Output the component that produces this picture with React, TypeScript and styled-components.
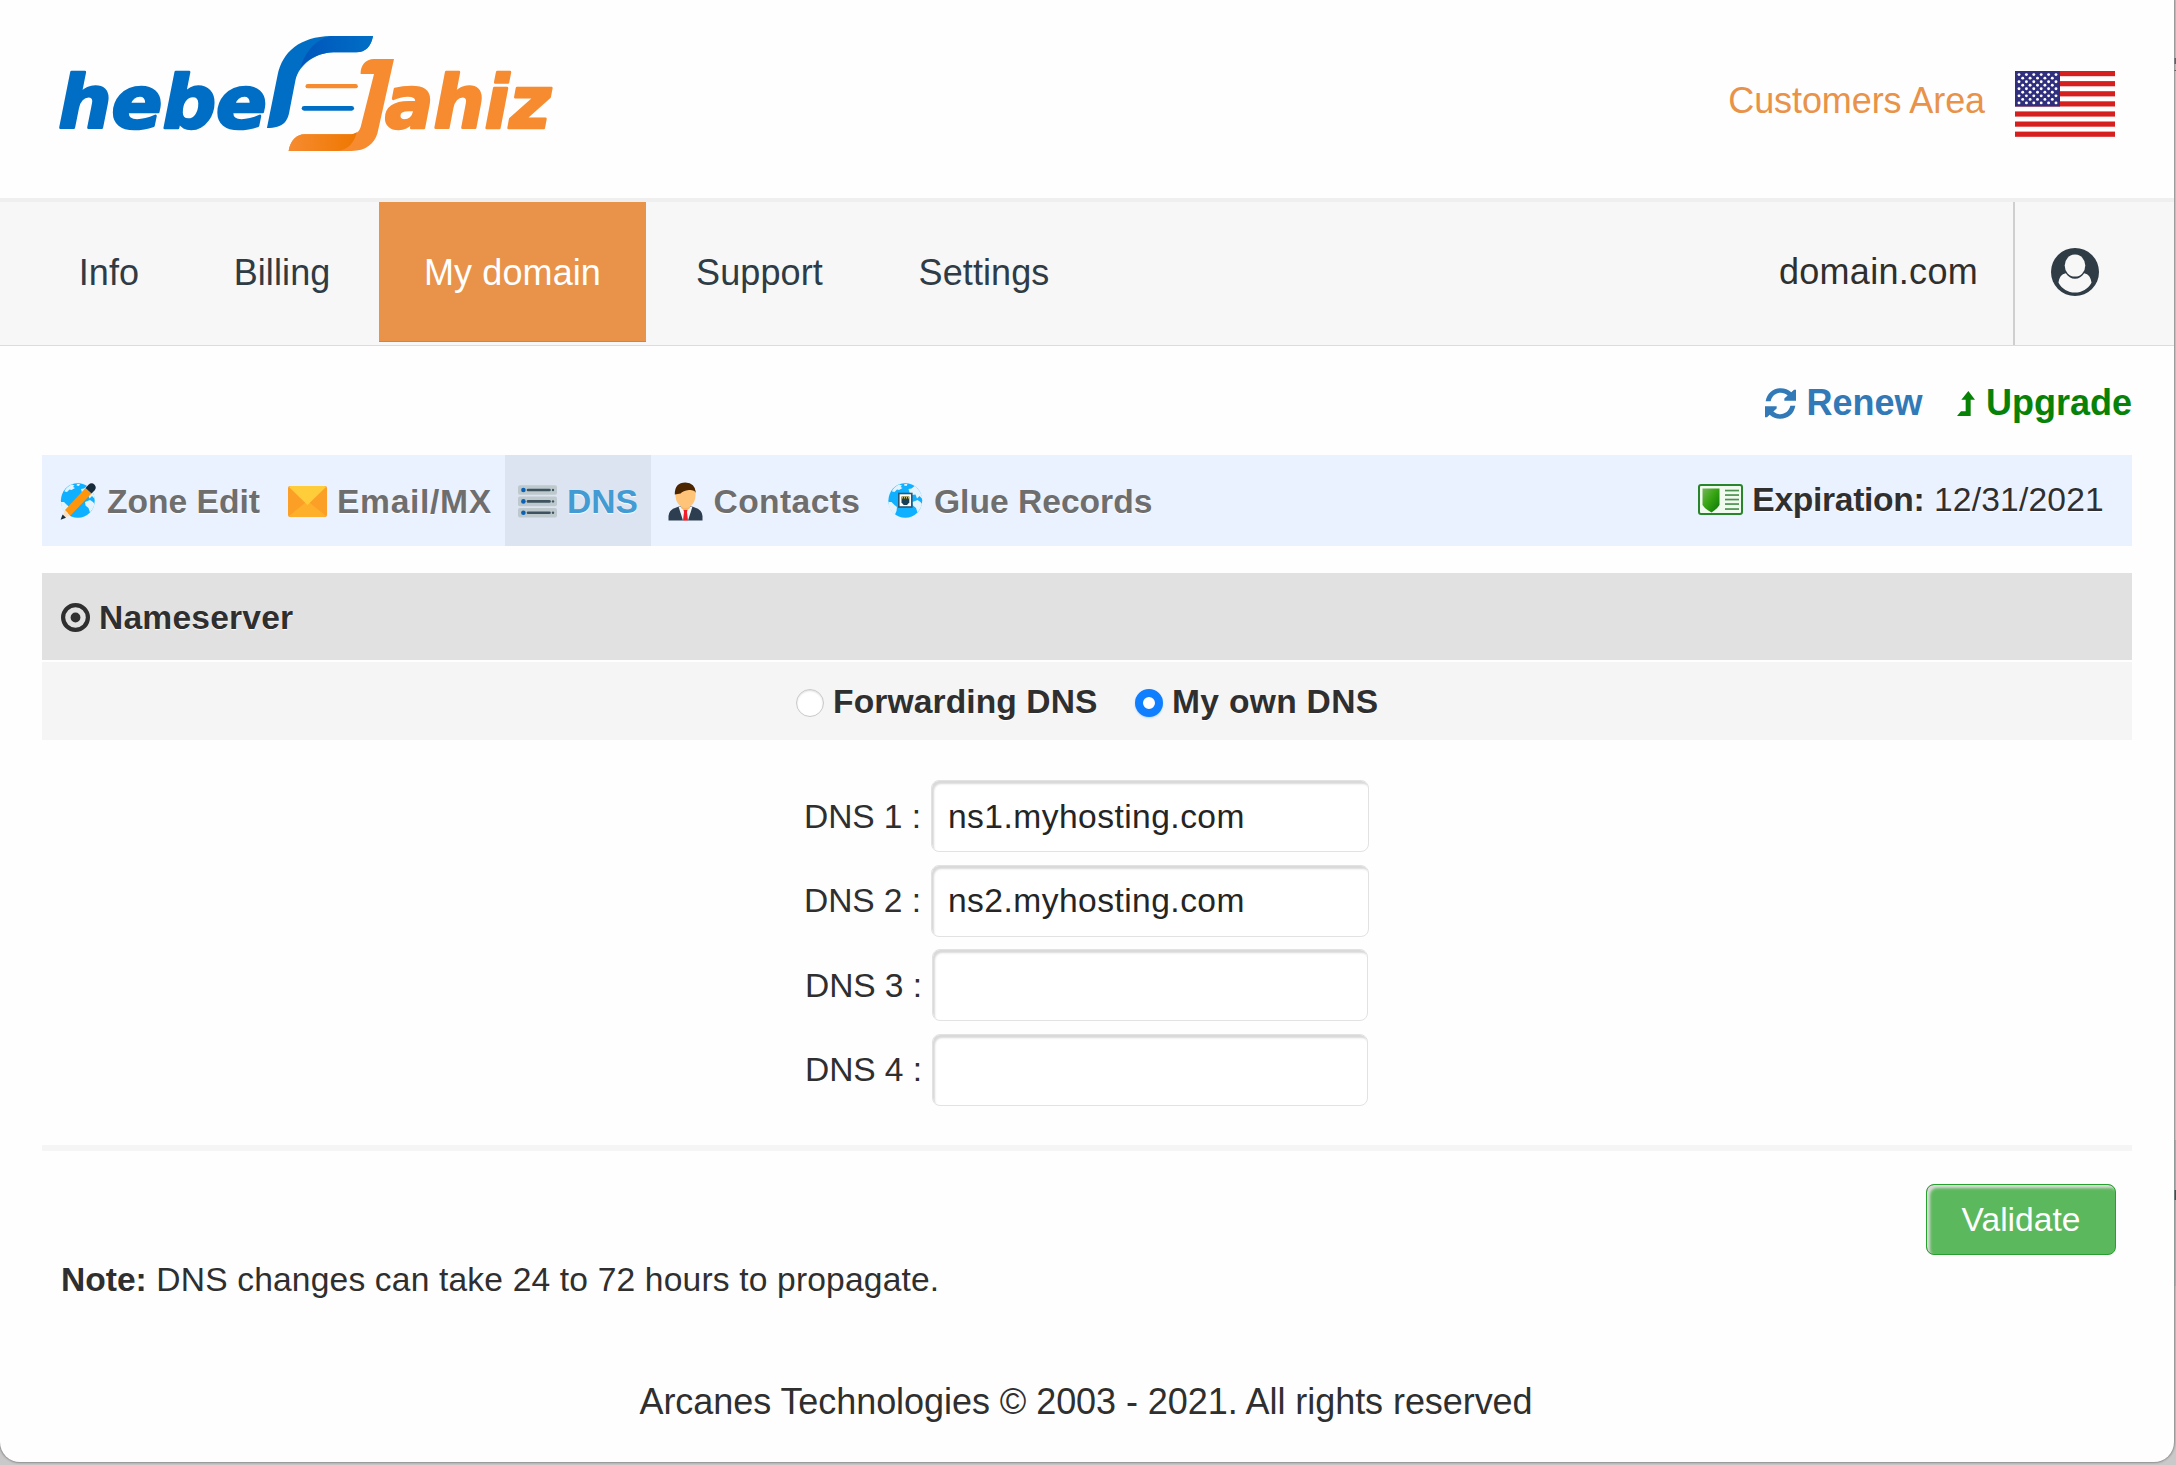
import React from "react";
import styled, { createGlobalStyle } from "styled-components";

const GlobalStyle = createGlobalStyle`
  * { box-sizing: border-box; }
  body {
    margin: 0;
    font-family: "Liberation Sans", Arial, sans-serif;
    font-size: 33.6px;
    color: #2f2f2f;
  }
`;

const Desktop = styled.div`
  width: 2176px;
  height: 1465px;
  padding: 0 2px 3px 0;
  overflow: hidden;
  background: linear-gradient(
    to bottom,
    #c9c9c9 0 58px, #4a5a66 58px 64px, #c9c9c9 64px 70px, #47545e 70px 71px, #d2d2d2 71px 1140px,
    #a3c0c3 1140px 1190px, #0c4a4c 1190px 1200px, #a3c0c3 1200px 1286px, #c9c9c9 1286px
  );
`;

const Window = styled.main`
  display: flex;
  flex-direction: column;
  height: 1462px;
  background: #fefefe;
  border-radius: 0 0 20px 20px;
  box-shadow: 0 0 2px 1px #8b8b8b;
`;

const Header = styled.header`
  display: flex;
  justify-content: space-between;
  height: 202px;
  padding: 20px 59px 0 40px;
  border-bottom: 4px solid #efefef;
`;

const Account = styled.div`
  display: flex;
  align-items: flex-start;
  gap: 30px;
  padding-top: 51px;
`;

const AreaLink = styled.a`
  padding-top: 9px;
  font-size: 36px;
  line-height: 41px;
  letter-spacing: -0.1px;
  color: #e8924a;
`;

const Nav = styled.nav`
  display: flex;
  height: 144px;
  padding-left: 29px;
  background: #f7f7f7;
  border-bottom: 1px solid #dcdcdc;
`;

const NavTab = styled.a<{ $width: number; $active?: boolean; $gap?: number }>`
  display: flex;
  align-items: center;
  justify-content: center;
  width: ${(p) => p.$width}px;
  height: 140px;
  margin-right: ${(p) => p.$gap ?? 0}px;
  padding-top: 3px;
  font-size: 36px;
  letter-spacing: 0.1px;
  color: ${(p) => (p.$active ? "#fff" : "#2f3b45")};
  background: ${(p) => (p.$active ? "#e8924a" : "transparent")};
  border-bottom: 1px solid ${(p) => (p.$active ? "#e67e22" : "transparent")};
`;

const DomainName = styled.div`
  display: flex;
  align-items: center;
  margin-left: auto;
  padding: 0 35px 3px 0;
  font-size: 36px;
  letter-spacing: 0.3px;
  border-right: 2px solid #cfcfcf;
`;

const Profile = styled.div`
  width: 159px;
  padding: 46px 0 0 36px;
`;

const Content = styled.section`
  padding: 0 42px;
`;

const Actions = styled.div`
  display: flex;
  justify-content: flex-end;
  align-items: center;
  height: 109px;
  padding-top: 5px;
`;

const ActionLink = styled.a<{ $color: string; $gap: number }>`
  display: flex;
  align-items: center;
  gap: ${(p) => p.$gap}px;
  font-size: 36px;
  font-weight: bold;
  color: ${(p) => p.$color};
  & + & { margin-left: 35px; }
`;

const Toolbar = styled.div`
  display: flex;
  height: 91px;
  padding-left: 5px;
  background: #ebf2ff;
`;

const Tool = styled.a<{ $width: number; $active?: boolean; $spacing?: number; $gap?: number }>`
  display: flex;
  align-items: center;
  gap: ${(p) => p.$gap ?? 10}px;
  width: ${(p) => p.$width}px;
  padding: 2px 0 0 13px;
  font-weight: bold;
  white-space: nowrap;
  letter-spacing: ${(p) => p.$spacing ?? 0}px;
  color: ${(p) => (p.$active ? "#429bd3" : "#6e6e6e")};
  background: ${(p) => (p.$active ? "#dce3f1" : "transparent")};
  text-shadow: 0 1px 1px #fff;
`;

const Expiration = styled.div`
  display: flex;
  align-items: center;
  margin-left: auto;
  padding: 0 28px 2px 0;
  letter-spacing: 0.2px;
  text-shadow: 0 1px 1px #fff;
  white-space: pre;
  svg { margin-right: 9px; }
  b { letter-spacing: -0.3px; }
`;

const SectionTitle = styled.h2`
  display: flex;
  align-items: center;
  gap: 9px;
  height: 87px;
  margin: 27px 0 2px;
  padding: 2px 0 0 19px;
  font-size: 33.6px;
  letter-spacing: 0.2px;
  text-shadow: 0 1px 1px #fff;
  background: #e1e1e1;
`;

const ModeRow = styled.div`
  display: flex;
  align-items: center;
  justify-content: center;
  gap: 37px;
  height: 78px;
  padding-top: 2px;
  font-weight: bold;
  background: #f5f5f5;
`;

const Mode = styled.label<{ $spacing: number }>`
  display: flex;
  align-items: center;
  gap: 9.5px;
  letter-spacing: ${(p) => p.$spacing}px;
  text-shadow: 0 1px 1px #fff;
`;

const Radio = styled.span<{ $on?: boolean }>`
  width: 28px;
  height: 28px;
  margin-top: 2px;
  border-radius: 50%;
  border: ${(p) => (p.$on ? "8px solid #107fff" : "1px solid #c9c9c9")};
  background: #fff;
  box-shadow: ${(p) => (p.$on ? "0 1px 2px #b9d6fa" : "inset 0 1px 2px #ddd")};
`;

const Form = styled.form`
  display: flex;
  flex-direction: column;
  gap: 12.5px;
  padding: 40px 0 0 761px;
`;

const Field = styled.label<{ $inset: number }>`
  display: flex;
  align-items: center;
  height: 72px;
  padding-left: ${(p) => p.$inset}px;
`;

const FieldName = styled.span`
  width: 128px;
  padding: 1px 0 0 1px;
  letter-spacing: -0.1px;
`;

const Input = styled.input<{ $width: number }>`
  width: ${(p) => p.$width}px;
  height: 72px;
  padding: 1px 0 0 16px;
  font: inherit;
  letter-spacing: 0.45px;
  color: #252525;
  background: #fff;
  border: 1px solid #e2e2e2;
  border-radius: 8px;
  outline: none;
  box-shadow: inset 2px 3px 2px #d9d9d9;
`;

const Rule = styled.hr`
  height: 6px;
  margin: 39.5px 0 33px;
  border: 0;
  background: #f5f5f5;
`;

const Submit = styled.button`
  display: block;
  width: 190px;
  height: 71px;
  margin: 0 16px 0 auto;
  padding: 1px 0 0;
  font: inherit;
  color: #fff;
  background: #5cb85c;
  border: 1px solid #27a02f;
  border-radius: 8px;
  box-shadow: inset 3px 3px 3px #dadada;
`;

const Note = styled.p`
  margin: 5px 0 0 19px;
  line-height: 40px;
  letter-spacing: 0.17px;
  b { letter-spacing: 0; }
`;

const Footer = styled.footer`
  margin-top: 81px;
  padding-right: 2px;
  font-size: 36px;
  line-height: 42px;
  letter-spacing: -0.06px;
  text-align: center;
`;

const Logo = () => (
  <svg width="540" height="150" viewBox="40 20 540 150">
    <defs>
      <linearGradient id="foldBlue">
        <stop offset="0" stopColor="#0055bb" />
        <stop offset="1" stopColor="#006fc6" />
      </linearGradient>
      <linearGradient id="foldOrange">
        <stop offset="0" stopColor="#f68b30" />
        <stop offset="1" stopColor="#ee7700" />
      </linearGradient>
    </defs>
    <g transform="translate(40 20) scale(0.34435 0.33333)">
      <g
        fontFamily='"DejaVu Sans", sans-serif'
        fontWeight="bold"
        fontStyle="italic"
        fontSize="220"
        strokeWidth="8"
        strokeLinejoin="round"
      >
        <text x="53" y="323" fill="#006ec5" stroke="#006ec5" textLength="606" lengthAdjust="spacingAndGlyphs">hebe</text>
        <text x="1002" y="323" fill="#f68b30" stroke="#f68b30" textLength="482" lengthAdjust="spacingAndGlyphs">ahiz</text>
      </g>
      <path fill="#006ec5" d="M659 324 L690 165 C704 95 755 50 845 48 H967 C962 78 946 97 918 97 H852 C800 98 752 135 742 180 L725 270 C720 303 708 324 659 324 Z" />
      <path fill="url(#foldBlue)" d="M845 48 H967 C962 78 946 97 918 97 H852 C815 98 778 115 756 143 C768 108 790 60 845 48 Z" />
      <path fill="#f68b30" d="M931 162 C931 136 945 117 970 117 H1028 L980 340 C971 372 945 393 905 393 H722 C727 362 745 343 768 343 H896 C918 343 928 336 932 318 L970 162 Z" />
      <path fill="url(#foldOrange)" d="M722 393 C727 362 745 343 768 343 H896 C908 343 915 340 920 336 C914 365 896 391 862 393 Z" />
      <rect x="771" y="192" width="152" height="13" rx="6.5" fill="#f68b30" />
      <rect x="760" y="258" width="152" height="14" rx="7" fill="#006ec5" />
    </g>
  </svg>
);

const Flag = () => (
  <svg width="100" height="66" viewBox="0 0 100 66">
    <rect width="100" height="66" fill="#fff" />
    {[0, 1, 2, 3, 4, 5, 6].map((i) => (
      <rect key={i} y={i * 10.1} width="100" height="5.2" fill="#d62020" />
    ))}
    <rect width="45" height="35.5" fill="#2f2f7d" />
    {Array.from({ length: 9 }, (_, r) =>
      Array.from({ length: r % 2 ? 5 : 6 }, (_, c) => (
        <circle key={`${r}-${c}`} cx={4 + (r % 2 ? 3.7 : 0) + c * 7.4} cy={3.6 + r * 3.54} r="1.45" fill="#fff" />
      ))
    )}
  </svg>
);

const UserIcon = () => (
  <svg width="48" height="48" viewBox="0 0 48 48">
    <circle cx="24" cy="24" r="24" fill="#2f3b45" />
    <ellipse cx="24" cy="17.6" rx="10.3" ry="11" fill="#f7f7f7" />
    <path fill="#f7f7f7" d="M7.5 34.8 C8 29.5 10.5 26 14.8 25.2 C17 28.6 20.2 30.800 24 30.800 C27.800 30.800 31 28.600 33.200 25.200 C37.500 26 40 29.500 40.500 34.800 C37 41 31 44.600 24 44.600 C17 44.600 11 41 7.500 34.800 Z" />
  </svg>
);

const RefreshIcon = () => (
  <svg width="31" height="31" viewBox="192 590 93 92" fill="#3179b7">
    <path id="half" d="M194 629 C198 605 216 590 239 590 C252 590 262 594 271 602 L279 595 H285 V628 H250 V621 L260 612 C254 607 247 604 239 604 C225 604 213 613 209 629 Z" />
    <use href="#half" transform="rotate(180 238.5 636)" />
  </svg>
);

const LevelUpIcon = () => (
  <svg width="18" height="25" viewBox="772 600 54 75" fill="#078207">
    <path d="M806 600 L826 626 H813 V675 H772 L784 661 H798 V626 H785 Z" />
  </svg>
);

const Globe = () => (
  <>
    <ellipse cx="17.8" cy="18.500" rx="17.600" ry="18" fill="#e4f2fc" />
    <ellipse cx="17.8" cy="18.500" rx="16.900" ry="17.300" fill="#0fb0ff" />
    <path
      fill="#e4f2fc"
      d="M5 8 C7 5 9.500 3.500 12 2.500 L14.500 3.500 L13 5 L15 6 L11.500 8 L9.500 7.500 L7 10 L4.500 9.500 Z M17 2 L20 2 L19 4 L16.500 3.500 Z M1 20 L4 20 L7 23 L9.500 25 L9 29 L7.500 32.500 C3 29 1 25 1 20 Z M21 7 L24 6.500 L27 4 C31 6.500 34.500 12 34.800 17 L32 14 L29.500 16.500 L28 12.500 L24 13 L22 10.500 Z M25 20 L30 18 L33 20 L34.500 22 C33.500 26 32 28 30 30.500 L28.500 26 L25.500 23.500 Z"
    />
  </>
);

const ZoneIcon = () => (
  <svg width="39" height="39" viewBox="0 0 39 39">
    <Globe />
    <path d="M1.500 36.500 L5 28 L10.500 33.500 Z" fill="#fbe0c0" />
    <path d="M0.600 37.800 L2.600 32.500 L6 35.800 Z" fill="#182b3a" />
    <path d="M5 28 L25.500 6 L31.500 11.500 L10.500 33.500 Z" fill="#ff950a" />
    <path d="M25.500 6 L28.500 2.800 Q31.500 0 34.600 2.700 Q37 5.800 34.500 8.400 L31.500 11.500 Z" fill="#182b3a" />
  </svg>
);

const MailIcon = () => (
  <svg width="39" height="39" viewBox="0 0 39 39">
    <rect y="4" width="39" height="31" rx="2" fill="#fb9f27" />
    <path d="M1 34 L19.500 19 L38 34 Q37.500 35 36 35 H3 Q1.500 35 1 34 Z" fill="#ffb02b" />
    <path d="M1 5 Q1.500 4 3 4 H36 Q37.500 4 38 5 L19.500 23 Z" fill="#ffcd3a" />
  </svg>
);

const ServerIcon = () => (
  <svg width="39" height="39" viewBox="0 0 39 39">
    {[3.2, 14.600, 26].map((y) => (
      <g key={y}>
        <rect y={y} width="39" height="9.600" rx="2" fill="#bdc9cd" />
        <circle cx="5.400" cy={y + 4.800} r="2.300" fill="#0a62b4" />
        <path d={`M10 ${y + 4.800} H31.500`} stroke="#3e535e" strokeWidth="2.600" strokeLinecap="round" />
        <circle cx="35" cy={y + 4.800} r="1.200" fill="#3e535e" />
      </g>
    ))}
  </svg>
);

const ContactIcon = () => (
  <svg width="39" height="39" viewBox="0 0 39 39">
    <path d="M4.500 38.500 V34 Q5 28 11 26 L16 24 H27 L32 26 Q38 28 38.500 34 V38.500 Z" fill="#2c3e50" />
    <path d="M14.500 24.500 L19 38.500 H24 L28.500 24.500 Z" fill="#f4f6fa" />
    <path d="M17 21 H26 V26 L21.500 29.500 L17 26 Z" fill="#f5b767" />
    <path d="M19.500 28 H23.500 L23 30 L24 38.500 H19 L20 30 Z" fill="#f0202a" />
    <path d="M11.500 9 Q11.500 3 21.500 3 Q31.500 3 31.500 9 Q32 16 30 20 Q26.500 26 21.500 26 Q16.500 26 13 20 Q11 16 11.500 9 Z" fill="#ffc477" />
    <path d="M10.800 12.500 Q10.500 0.500 21.500 0.500 Q31 0.500 32 11 L31 9.500 Q29 7.500 25 8 Q19 8.500 16.500 11.500 Q14 12 10.800 12.500 Z" fill="#4b2500" />
  </svg>
);

const GlueIcon = () => (
  <svg width="39" height="39" viewBox="-1.500 0 39 39">
    <Globe />
    <rect x="11.300" y="11.500" width="13" height="13.500" fill="#fff" stroke="#2b5771" strokeWidth="1.600" />
    <path d="M14 14.500 H21.800 V20.500 L19.500 23 H16.200 L14 20.500 Z" fill="#173f55" />
    <path d="M15 14.500 V16.500 M17 14.500 V16.500 M19 14.500 V16.500 M21 14.500 V16.500" stroke="#d5b23c" />
  </svg>
);

const CertificateIcon = () => (
  <svg width="45" height="31" viewBox="0 0 45 31">
    <defs>
      <linearGradient id="shield" x1="0" y1="0" x2="1" y2="1">
        <stop offset="0" stopColor="#75b65a" />
        <stop offset="0.450" stopColor="#37a512" />
        <stop offset="1" stopColor="#087508" />
      </linearGradient>
    </defs>
    <rect x="1" y="1" width="43" height="29" rx="2" fill="#f1faef" stroke="#27862b" strokeWidth="2" />
    <path d="M4.500 4.500 H21.500 V21 Q19 25 13.500 28.500 Q7 25 4.500 21 Z" fill="url(#shield)" />
    {[6.500, 11, 15.500, 20, 25].map((y) => (
      <rect key={y} x="27" y={y - 0.800} width="14" height="1.700" fill="#4d9150" />
    ))}
  </svg>
);

const TargetIcon = () => (
  <svg width="29" height="29" viewBox="0 0 29 29">
    <circle cx="14.500" cy="14.500" r="12.400" fill="none" stroke="#2f2f2f" strokeWidth="4.200" />
    <circle cx="14.500" cy="14.500" r="4.900" fill="#2f2f2f" />
  </svg>
);

const fields = [
  { name: "DNS 1 :", value: "ns1.myhosting.com", inset: 0, width: 438 },
  { name: "DNS 2 :", value: "ns2.myhosting.com", inset: 0, width: 438 },
  { name: "DNS 3 :", value: "", inset: 1, width: 436 },
  { name: "DNS 4 :", value: "", inset: 1, width: 436 },
];

export default function App() {
  return (
    <>
      <GlobalStyle />
      <Desktop>
        <Window>
          <Header>
            <Logo />
            <Account>
              <AreaLink>Customers Area</AreaLink>
              <Flag />
            </Account>
          </Header>
          <Nav>
            <NavTab $width={160}>Info</NavTab>
            <NavTab $width={186} $gap={4}>Billing</NavTab>
            <NavTab $width={267} $active>My domain</NavTab>
            <NavTab $width={227}>Support</NavTab>
            <NavTab $width={222}>Settings</NavTab>
            <DomainName>domain.com</DomainName>
            <Profile><UserIcon /></Profile>
          </Nav>
          <Content>
            <Actions>
              <ActionLink $color="#3179b7" $gap={10}><RefreshIcon />Renew</ActionLink>
              <ActionLink $color="#078207" $gap={10.5}><LevelUpIcon />Upgrade</ActionLink>
            </Actions>
            <Toolbar>
              <Tool $width={228} $gap={8}><ZoneIcon />Zone Edit</Tool>
              <Tool $width={230} $spacing={0.7}><MailIcon />Email/MX</Tool>
              <Tool $width={146} $active><ServerIcon />DNS</Tool>
              <Tool $width={222} $spacing={0.4} $gap={10.5}><ContactIcon />Contacts</Tool>
              <Tool $width={300} $gap={9}><GlueIcon />Glue Records</Tool>
              <Expiration><CertificateIcon /><b>Expiration:</b> 12/31/2021</Expiration>
            </Toolbar>
            <SectionTitle><TargetIcon />Nameserver</SectionTitle>
            <ModeRow>
              <Mode $spacing={0.1}><Radio />Forwarding DNS</Mode>
              <Mode $spacing={0.3}><Radio $on />My own DNS</Mode>
            </ModeRow>
            <Form>
              {fields.map((f) => (
                <Field key={f.name} $inset={f.inset}>
                  <FieldName>{f.name}</FieldName>
                  <Input $width={f.width} defaultValue={f.value} />
                </Field>
              ))}
            </Form>
            <Rule />
            <Submit>Validate</Submit>
            <Note><b>Note:</b> DNS changes can take 24 to 72 hours to propagate.</Note>
          </Content>
          <Footer>Arcanes Technologies © 2003 - 2021. All rights reserved</Footer>
        </Window>
      </Desktop>
    </>
  );
}
